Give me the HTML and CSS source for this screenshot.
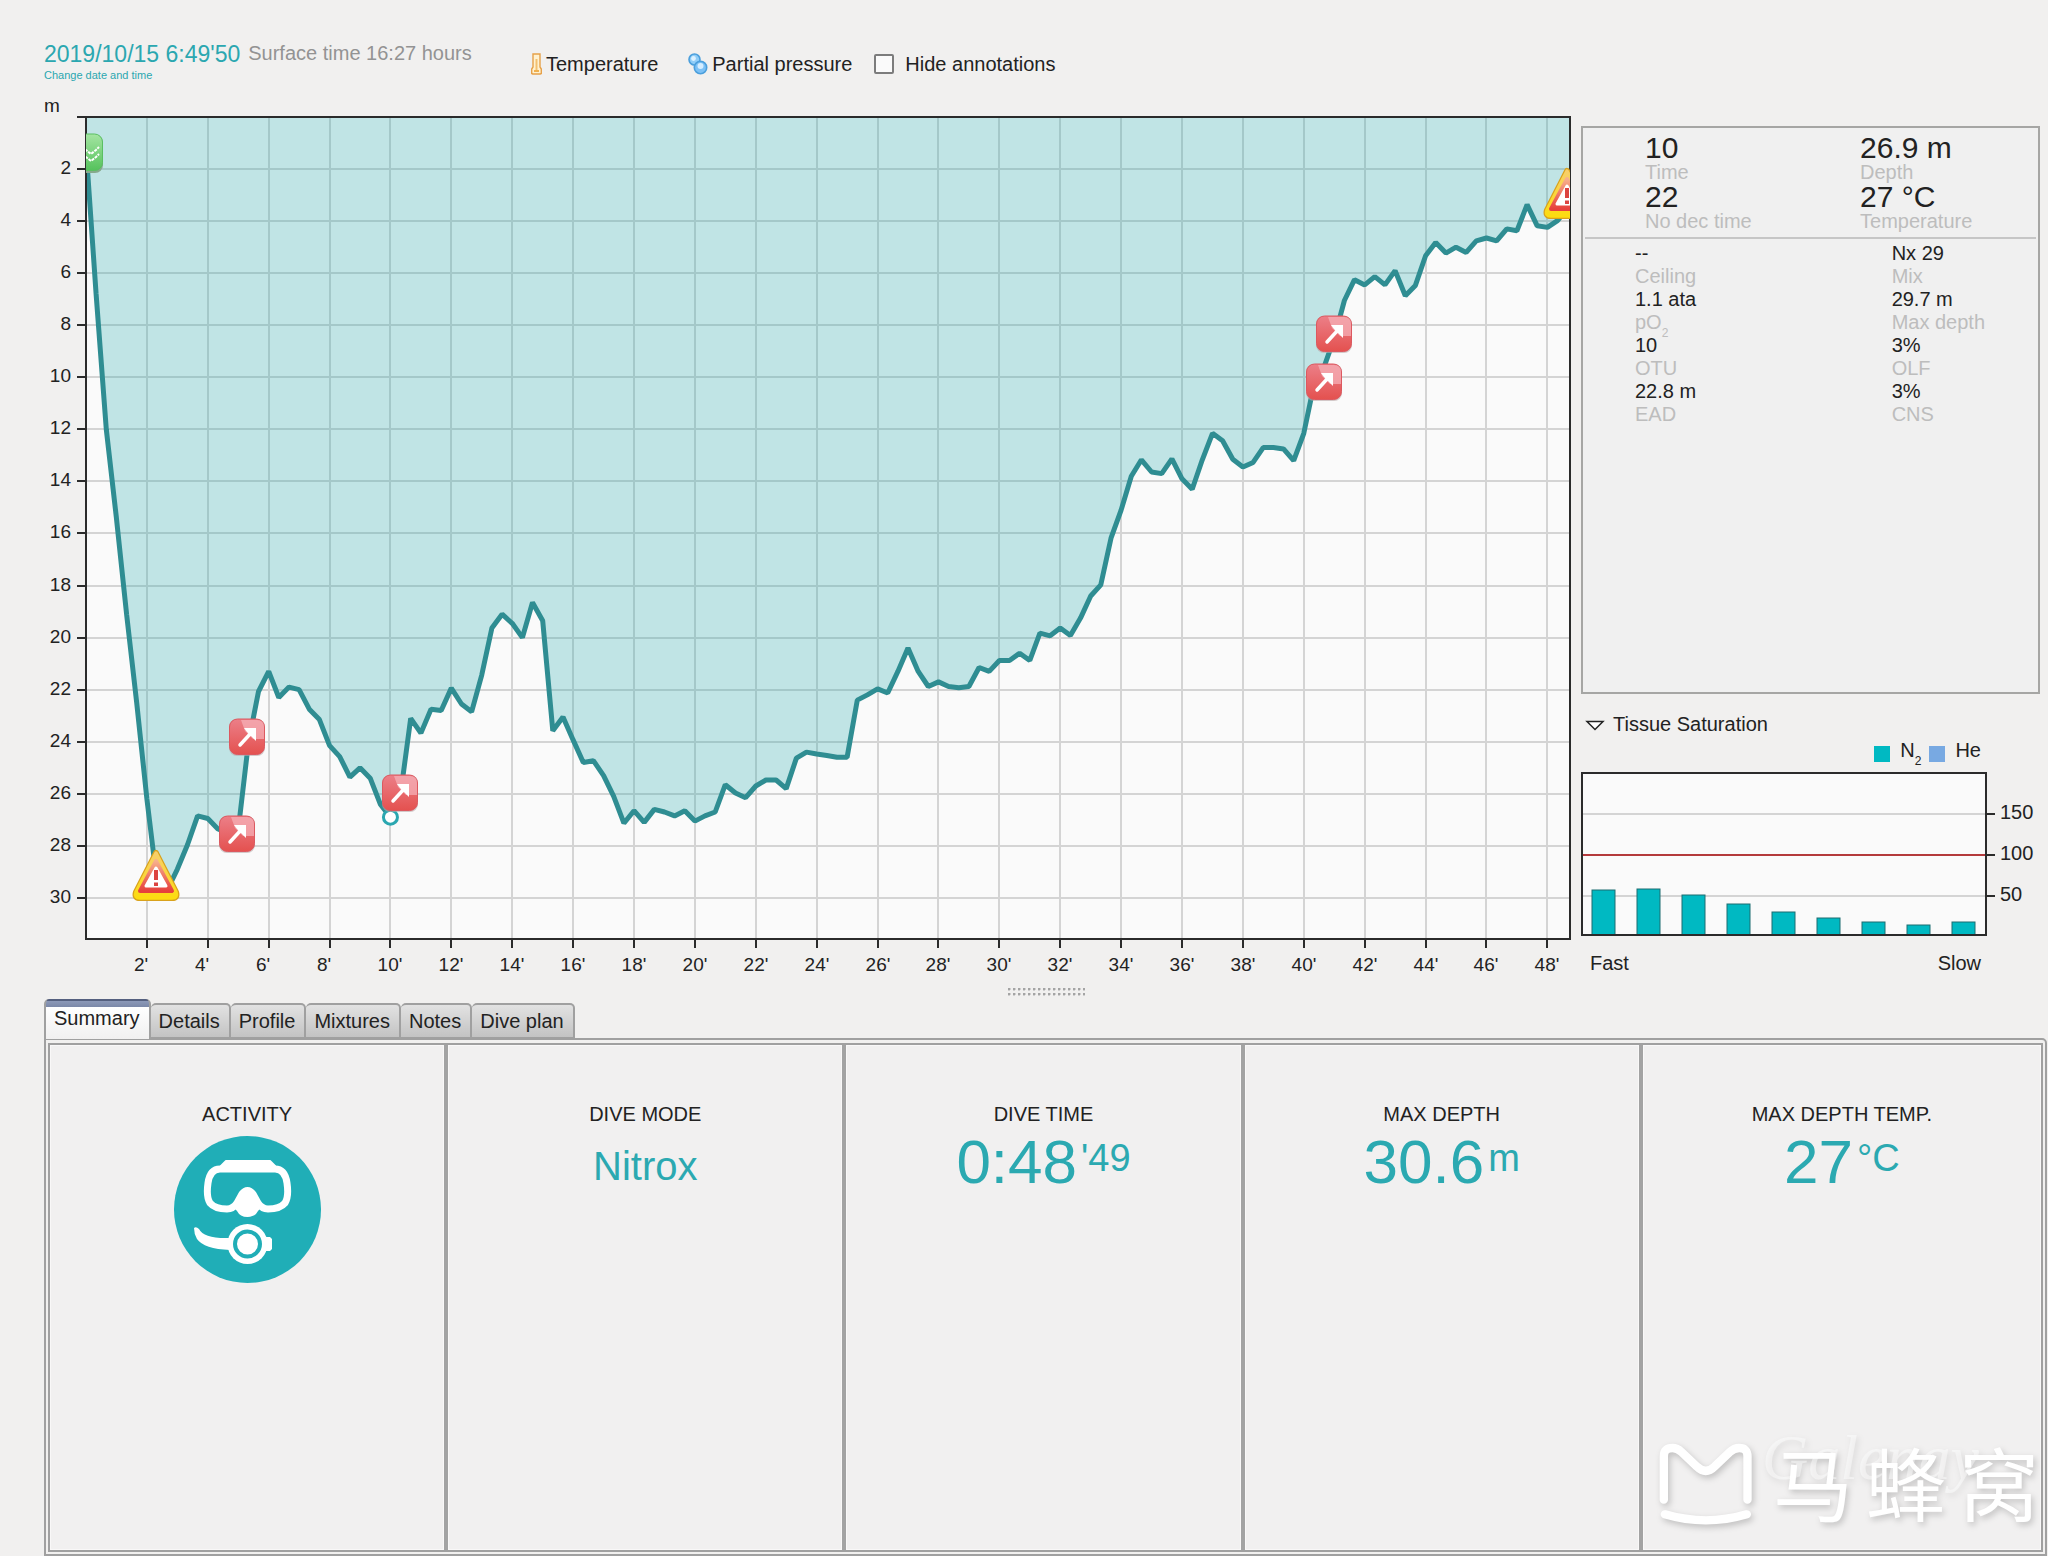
FILE: index.html
```html
<!DOCTYPE html>
<html lang="en">
<head>
<meta charset="utf-8">
<meta name="viewport" content="width=device-width, initial-scale=1">
<title>Dive log</title>
<link rel="stylesheet" href="styles.css">
</head>
<body>
<header class="header">
  <div class="when">
    <div class="when-line">
      <h1 class="date">2019/10/15 6:49'50</h1>
      <span class="surface">Surface time 16:27 hours</span>
    </div>
    <a class="change" href="#">Change date and time</a>
  </div>
  <div class="toolbar">
    <button class="tool" type="button">
      <svg width="11" height="22" viewBox="0 0 11 22" aria-hidden="true">
        <path d="M2 1h7v13l1.300 2v4.500l-1 .5H1.700l-1-.5V16L2 14z" fill="#fff1cf" stroke="#e6a14a" stroke-width="1.400"/>
        <path d="M5.500 6v11" stroke="#f3c070" stroke-width="2"/>
        <path d="M3 18h5" stroke="#f0b04e" stroke-width="2"/>
      </svg>
      <span>Temperature</span>
    </button>
    <button class="tool" type="button">
      <svg width="20" height="22" viewBox="0 0 20 22" aria-hidden="true">
        <circle cx="6.500" cy="6.500" r="5.500" fill="#8fcdf8" stroke="#4b9fdc" stroke-width="1.600"/>
        <circle cx="12.500" cy="14.500" r="6.200" fill="#7cc1f6" stroke="#4b9fdc" stroke-width="1.600"/>
        <circle cx="5.500" cy="5.500" r="2.400" fill="#dcf1ff"/>
        <circle cx="12.500" cy="13" r="3" fill="#d4edff"/>
      </svg>
      <span>Partial pressure</span>
    </button>
    <label class="check"><input type="checkbox"><span>Hide annotations</span></label>
  </div>
</header>

<main class="main">
  <section class="top">
    <svg class="profile" id="profile" viewBox="0 0 1528 880" role="img" aria-label="Depth profile">
      <defs>
        <linearGradient id="red" x1="0" y1="0" x2="0" y2="1">
          <stop offset="0" stop-color="#ec7f88"/><stop offset="1" stop-color="#e4514f"/>
        </linearGradient>
        <linearGradient id="green" x1="0" y1="0" x2="0" y2="1">
          <stop offset="0" stop-color="#a4e5a2"/><stop offset="1" stop-color="#55c25c"/>
        </linearGradient>
        <linearGradient id="yellow" x1="0" y1="0" x2="0" y2="1">
          <stop offset="0" stop-color="#f8cf6a"/><stop offset="1" stop-color="#fcdc10"/>
        </linearGradient>
        <linearGradient id="alarm" x1="0" y1="0" x2="0" y2="1">
          <stop offset="0" stop-color="#f7b08c"/><stop offset="1" stop-color="#e6403c"/>
        </linearGradient>
        <clipPath id="plot-clip"><rect x="42" y="20" width="1484" height="823"/></clipPath>
        <g id="ascent">
          <rect x="-18" y="-18" width="36" height="37" rx="8" fill="#b9a7a7" opacity=".6"/>
          <rect x="-17.500" y="-18" width="35" height="35.500" rx="8" fill="url(#red)" stroke="#dc5960"/>
          <path d="M-6-17H10q7 0 7 7V2H6L-2-6z" fill="#f6b3bb" opacity=".7"/>
          <path d="M-7 8L4-4" stroke="#fff" stroke-width="3.500" stroke-linecap="round"/>
          <path d="M-3-9H9V4L5 0 0-5z" fill="#fff"/>
        </g>
        <g id="warning">
          <path d="M0-22L20 17q2 6-4 6H-16q-6 0-4-6z" fill="url(#yellow)" stroke="#d9a21c" stroke-width="6" stroke-linejoin="round"/>
          <path d="M0-22L20 17q2 6-4 6H-16q-6 0-4-6z" fill="url(#yellow)" stroke="url(#yellow)" stroke-width="3.500" stroke-linejoin="round"/>
          <path d="M0-14L16 16H-16z" fill="url(#alarm)" stroke="url(#alarm)" stroke-width="4" stroke-linejoin="round"/>
          <path d="M0-7L10 11H-10z" fill="#fff" stroke="#fff" stroke-width="3" stroke-linejoin="round"/>
          <path d="M0-5V5" stroke="#dc4440" stroke-width="4"/>
          <rect x="-2" y="7.500" width="4" height="3.500" fill="#dc4440"/>
        </g>
        <g id="start">
          <rect x="-18" y="-18" width="36" height="38" rx="8" fill="#86a98c"/>
          <rect x="-18" y="-19" width="35.500" height="36.500" rx="8" fill="url(#green)" stroke="#5abf62"/>
          <path d="M-6-3l3-3 4 3 5 4 5-4 3-3M-6 5l3-3 4 2 5 4 5-4 3-3" fill="none" stroke="#fff" stroke-width="2" stroke-dasharray="3 1"/>
        </g>
      </defs>
    </svg>

    <aside class="side">
      <div class="panel">
        <dl class="stats stats-big">
          <div><dd>10</dd><dt>Time</dt></div>
          <div><dd>26.9 m</dd><dt>Depth</dt></div>
          <div><dd>22</dd><dt>No dec time</dt></div>
          <div><dd>27 °C</dd><dt>Temperature</dt></div>
        </dl>
        <dl class="stats stats-small">
          <div><dd>--</dd><dt>Ceiling</dt></div>
          <div><dd>Nx 29</dd><dt>Mix</dt></div>
          <div><dd>1.1 ata</dd><dt>pO<sub>2</sub></dt></div>
          <div><dd>29.7 m</dd><dt>Max depth</dt></div>
          <div><dd>10</dd><dt>OTU</dt></div>
          <div><dd>3%</dd><dt>OLF</dt></div>
          <div><dd>22.8 m</dd><dt>EAD</dt></div>
          <div><dd>3%</dd><dt>CNS</dt></div>
        </dl>
      </div>
      <button class="fold" type="button" aria-expanded="true">
        <svg width="20" height="12" viewBox="0 0 20 12" aria-hidden="true"><path d="M2 1.500H18L10 9.500z" fill="#fff" stroke="#222" stroke-width="1.500"/></svg>
        <span>Tissue Saturation</span>
      </button>
      <div class="legend">
        <i class="swatch swatch-n"></i><span class="gas">N<sub>2</sub></span>
        <i class="swatch swatch-he"></i><span class="gas">He</span>
      </div>
      <svg class="tissue" id="tissue" viewBox="0 0 459 206" role="img" aria-label="Tissue saturation"></svg>
    </aside>
  </section>

  <div class="grip" aria-hidden="true"></div>

  <div class="tabs" role="tablist">
    <button class="tab tab-on" role="tab" aria-selected="true" type="button">Summary</button>
    <button class="tab" role="tab" type="button">Details</button>
    <button class="tab" role="tab" type="button">Profile</button>
    <button class="tab" role="tab" type="button">Mixtures</button>
    <button class="tab" role="tab" type="button">Notes</button>
    <button class="tab" role="tab" type="button">Dive plan</button>
  </div>

  <section class="sheet" role="tabpanel">
    <div class="cells">
      <article class="cell">
        <h2>ACTIVITY</h2>
        <svg class="activity" width="147" height="147" viewBox="0 0 147 147" role="img" aria-label="Scuba">
          <circle cx="73.500" cy="73.500" r="73.500" fill="#20aeb7"/>
          <path d="M47 30L52 25H96L101 30z" fill="#fff" stroke="#fff" stroke-width="2" stroke-linejoin="round"/>
          <path d="M46 33H101Q111 33 113 47Q115 61 111 67Q106 73 94 73Q88 73 84 67L79 58Q73.500 51 68 58L63 67Q59 73 53 73Q41 73 36 67Q32 61 34 47Q36 33 46 33z" fill="none" stroke="#fff" stroke-width="7" stroke-linejoin="round"/>
          <path d="M73.500 53Q78 53 81 58L87 70Q86 74 84 75Q81 81 73.500 81Q66 81 63 75Q61 74 60 70L66 58Q69 53 73.500 53z" fill="#fff"/>
          <path d="M20 92Q22 90 25 93Q30 103 56 102V114Q30 113 23 103Q20 98 20 92z" fill="#fff"/>
          <path d="M88 101H96L98 103V113L96 115H88z" fill="#fff"/>
          <circle cx="73.500" cy="108" r="20" fill="#fff"/>
          <circle cx="73.500" cy="108" r="12.500" fill="none" stroke="#20aeb7" stroke-width="4"/>
        </svg>
      </article>
      <article class="cell">
        <h2>DIVE MODE</h2>
        <p class="word">Nitrox</p>
      </article>
      <article class="cell">
        <h2>DIVE TIME</h2>
        <p class="figure"><span>0:48</span><span class="unit">'49</span></p>
      </article>
      <article class="cell">
        <h2>MAX DEPTH</h2>
        <p class="figure"><span>30.6</span><span class="unit">m</span></p>
      </article>
      <article class="cell">
        <h2>MAX DEPTH TEMP.</h2>
        <p class="figure"><span>27</span><span class="unit">°C</span></p>
      </article>
    </div>
  </section>
</main>

<div class="watermark" lang="zh">
  <svg width="97" height="85" viewBox="175 185 290 255" aria-hidden="true">
    <path d="M192 358V228Q192 203 218 203Q232 203 245 215L290 258Q318 285 345 258L390 215Q403 203 418 203Q443 203 443 228V358M195 402Q318 438 441 402" fill="none" stroke="#fff" stroke-width="25" stroke-linecap="round" stroke-linejoin="round"/>
  </svg>
  <span class="signature">Galenay</span>
  <span class="brand"><span>马</span><span>蜂</span><span>窝</span></span>
</div>
<script src="charts.js"></script>
</body>
</html>
```
FILE: charts.js
```javascript
const NS = 'http://www.w3.org/2000/svg';

function add(parent, name, attrs, text) {
  const el = document.createElementNS(NS, name);
  for (const key in attrs) el.setAttribute(key, attrs[key]);
  if (text !== undefined) el.textContent = text;
  parent.appendChild(el);
  return el;
}

// Depth in metres, one sample every 20 seconds.
const depths = [
  1.2, 6.8, 12, 15.4, 19.1, 22.5, 26.2, 29.4, 29.7, 28.9, 27.96, 26.85, 26.95, 27.35, 27.5,
  27.4, 24.05, 22.07, 21.3, 22.3, 21.9, 22, 22.75, 23.15, 24.15, 24.57, 25.36, 25, 25.4, 26.4,
  26.9, 26, 23.1, 23.67, 22.75, 22.8, 21.94, 22.55, 22.85, 21.43, 19.63, 19.1, 19.45, 20, 18.65,
  19.35, 23.58, 23.05, 23.93, 24.8, 24.73, 25.3, 26.1, 27.13, 26.65, 27.1, 26.6, 26.7, 26.85, 26.65,
  27.05, 26.85, 26.7, 25.65, 25.97, 26.15, 25.7, 25.47, 25.47, 25.8, 24.63, 24.4, 24.47, 24.53, 24.6,
  24.6, 22.4, 22.2, 21.97, 22.13, 21.3, 20.4, 21.3, 21.88, 21.7, 21.88, 21.93, 21.88, 21.15, 21.3,
  20.88, 20.88, 20.6, 20.88, 19.83, 19.93, 19.63, 19.92, 19.25, 18.4, 17.97, 16.18, 15.1, 13.8, 13.17,
  13.64, 13.7, 13.13, 13.9, 14.3, 13.17, 12.15, 12.44, 13.15, 13.45, 13.27, 12.7, 12.7, 12.75, 13.2,
  12.15, 10.3, 9.6, 8.5, 7.05, 6.25, 6.45, 6.13, 6.45, 5.9, 6.87, 6.47, 5.33, 4.82, 5.23,
  5, 5.2, 4.76, 4.65, 4.76, 4.3, 4.37, 3.37, 4.18, 4.24, 3.98, 3.5
];

function drawProfile(svg) {
  const left = 42, right = 1526, top = 21, bottom = 843;
  const x = min => left + min * 30.445;
  const y = m => top + m * 26.03;

  add(svg, 'rect', { x: left, y: top, width: right - left, height: bottom - top, class: 'plot' });
  for (let m = 2; m <= 30; m += 2) add(svg, 'line', { x1: left, x2: right, y1: Math.round(y(m)), y2: Math.round(y(m)), class: 'grid' });
  for (let t = 2; t <= 48; t += 2) add(svg, 'line', { x1: Math.round(x(t)), x2: Math.round(x(t)), y1: top, y2: bottom, class: 'grid' });

  const clip = add(svg, 'g', { 'clip-path': 'url(#plot-clip)' });
  const pts = depths.map((d, i) => x(i / 3).toFixed(1) + ',' + y(d).toFixed(1));
  pts.push(right + ',' + y(3.3));
  add(clip, 'polygon', { points: [left + ',' + top].concat(pts, right + ',' + top).join(' '), class: 'water' });
  add(clip, 'polyline', { points: pts.join(' '), class: 'track' });

  add(svg, 'path', { d: `M${left} ${top}H${right}V${bottom}H${left}Z`, class: 'frame' });
  add(svg, 'line', { x1: 33, x2: left, y1: top, y2: top, class: 'frame' });
  add(svg, 'text', { x: 0, y: 16 }, 'm');
  for (let m = 2; m <= 30; m += 2) {
    const at = Math.round(y(m));
    add(svg, 'line', { x1: 33, x2: left, y1: at, y2: at, class: 'frame' });
    add(svg, 'text', { x: 27, y: at + 5, 'text-anchor': 'end' }, m);
  }
  for (let t = 2; t <= 48; t += 2) {
    const at = Math.round(x(t));
    add(svg, 'line', { x1: at, x2: at, y1: bottom, y2: bottom + 9, class: 'frame' });
    add(svg, 'text', { x: t < 10 ? at - 6 : at, y: 875, 'text-anchor': 'middle' }, t + "'");
  }

  const marks = add(svg, 'g', { 'clip-path': 'url(#plot-clip)' });
  [[203, 641], [193, 738], [1290, 238], [1280, 286]].forEach(p => add(marks, 'use', { href: '#ascent', x: p[0], y: p[1] }));
  add(marks, 'circle', { cx: x(10), cy: y(26.9), r: 7, class: 'cursor' });
  add(marks, 'use', { href: '#ascent', x: 356, y: 697 });
  add(marks, 'use', { href: '#warning', x: 112, y: 779 });
  add(marks, 'use', { href: '#warning', x: 1523, y: 97 });
  add(marks, 'use', { href: '#start', x: 41, y: 57 });
}

function drawTissue(svg) {
  const right = 405, top = 1, bottom = 163;
  const y = v => Math.round(165 - v * 0.82);
  add(svg, 'rect', { x: 1, y: top, width: right - 1, height: bottom - top, class: 'plot' });
  [50, 150].forEach(v => add(svg, 'line', { x1: 1, x2: right, y1: y(v), y2: y(v), class: 'grid' }));
  add(svg, 'line', { x1: 1, x2: right, y1: y(100), y2: y(100), class: 'limit' });
  [57, 58.5, 51, 40.6, 30.5, 22.8, 18.6, 14.6, 18.6].forEach((v, i) =>
    add(svg, 'rect', { x: 11 + i * 45, y: y(v), width: 23, height: bottom - y(v), class: 'bar' }));
  add(svg, 'rect', { x: 1, y: top, width: right - 1, height: bottom - top, class: 'frame' });
  [50, 100, 150].forEach(v => {
    add(svg, 'line', { x1: right, x2: right + 9, y1: y(v), y2: y(v), class: 'frame' });
    add(svg, 'text', { x: 419, y: y(v) + 5 }, v);
  });
  add(svg, 'text', { x: 9, y: 198 }, 'Fast');
  add(svg, 'text', { x: 400, y: 198, 'text-anchor': 'end' }, 'Slow');
}

drawProfile(document.getElementById('profile'));
drawTissue(document.getElementById('tissue'));
```
FILE: styles.css
```css
* { box-sizing: border-box; }

body {
  margin: 0;
  min-height: 100vh;
  display: flex;
  flex-direction: column;
  position: relative;
  background: #f1f0ef;
  color: #222;
  font-family: "Liberation Sans", Arial, Helvetica, sans-serif;
  font-size: 20px;
}

h1, h2, p, dl, dd { margin: 0; font-weight: 400; }

button {
  font: inherit;
  color: inherit;
  background: none;
  border: 0;
  padding: 0;
}

/* Header */
.header {
  display: flex;
  align-items: flex-start;
  height: 96px;
  padding-left: 44px;
}
.when { flex: none; width: 487px; padding-top: 40px; }
.when-line { display: flex; gap: 8px; line-height: 28px; }
.date { font-size: 23px; color: #2ba7b0; }
.surface { line-height: 26px; color: #939393; }
.change {
  display: block;
  font-size: 11px;
  line-height: 14px;
  color: #2ba7b0;
  text-decoration: none;
}
.toolbar { display: flex; align-items: center; padding-top: 52px; line-height: 24px; }
.tool { display: flex; align-items: center; gap: 4px; margin-right: 30px; }
.check { display: flex; align-items: center; gap: 11px; margin-left: -8px; }
.check input {
  appearance: none;
  width: 20px;
  height: 20px;
  margin: 0;
  border: 2px solid #7c7c7c;
  border-radius: 2px;
  background: #fafafa;
}

/* Charts */
.main { flex: 1; display: flex; flex-direction: column; padding-left: 44px; }
.top {
  display: grid;
  grid-template-columns: 1528fr 459fr;
  column-gap: 9px;
  padding-right: 8px;
}
.profile, .tissue { display: block; width: 100%; height: auto; overflow: hidden; }
.profile text, .tissue text { font-size: 19px; fill: #222; }
.tissue text { font-size: 20px; }
.plot { fill: #fafafa; }
.grid { stroke: #d4d4d4; stroke-width: 2; }
.water { fill: #12a2a6; fill-opacity: .25; }
.track { fill: none; stroke: #2f8d92; stroke-width: 5; stroke-linejoin: bevel; }
.frame { fill: none; stroke: #2b2b2b; stroke-width: 2; }
.cursor { fill: #fff; stroke: #2ba7b0; stroke-width: 3; }
.limit { stroke: #b43a3c; stroke-width: 2; }
.bar { fill: #00b9c2; stroke: #1d6c70; stroke-width: 1; }

.side { padding-top: 30px; }
.panel {
  height: 568px;
  border: 2px solid #a6a6a4;
  background: #f0f0f0;
  padding: 5px 2px;
}
.stats { display: grid; }
.stats dt { color: #bdbdbd; }
.stats sub, .legend sub { font-size: 12px; line-height: 0; vertical-align: -8px; }
.stats-big {
  grid-template-columns: 11fr 9fr;
  padding: 0 0 6px 60px;
  border-bottom: 2px solid #c6c6c6;
}
.stats-big dd { font-size: 30px; line-height: 29px; }
.stats-big dt { line-height: 20px; }
.stats-small { grid-template-columns: 16fr 9fr; padding: 3px 0 0 50px; line-height: 23px; }

.fold { display: flex; align-items: center; gap: 8px; padding: 18px 0 0 4px; line-height: 24px; }
.fold svg { margin-top: 3px; }
.legend {
  display: flex;
  align-items: flex-end;
  justify-content: flex-end;
  padding-right: 59px;
  height: 28px;
  margin-bottom: 8px;
}
.swatch { width: 16px; height: 16px; margin: 0 10px 2px 0; }
.swatch-n { background: #00b9c2; }
.swatch-he { background: #78a9e2; }
.gas { line-height: 28px; }
.gas + .swatch { margin-left: 8px; }

.grip {
  align-self: center;
  width: 77px;
  height: 8px;
  margin: 10px 0 3px;
  background: radial-gradient(circle at 1px 1px, #a4a4a4 1px, transparent 2px) 0 0 / 5px 5px;
}

/* Tabs */
.tabs { display: flex; align-items: flex-end; height: 40px; position: relative; z-index: 1; margin-bottom: -1px; }
.tab {
  height: 36px;
  padding: 0 9px 0 8px;
  border: 2px solid #a0a0a0;
  border-left-width: 0;
  border-radius: 5px 5px 0 0;
  background: linear-gradient(#e2e2e2, #c3c3c3);
}
.tab-on {
  height: 40px;
  padding-bottom: 2px;
  border-left-width: 2px;
  border-top: 0;
  border-bottom: 0;
  background: linear-gradient(#55607f 2px, #8c99b8 2px, #7b88a8 8px, #fff 8px, #f1f0f0);
}

/* Summary */
.sheet {
  flex: 1;
  display: flex;
  min-height: 400px;
  margin-right: 1px;
  padding: 3px 2px 2px;
  border: 2px solid #a0a0a0;
  border-radius: 0 5px 0 0;
}
.cells {
  flex: 1;
  display: grid;
  grid-template-columns: repeat(4, 394fr) 398fr;
  gap: 4px;
  border: 2px solid #a0a0a0;
  background: #a3a3a3;
}
.cell {
  display: flex;
  flex-direction: column;
  align-items: center;
  padding-top: 56px;
  background: #f1f0f0;
  box-shadow: inset 0 0 1px 1px #fff9;
}
.cell h2 { font-size: 20px; line-height: 26px; }
.activity { margin-top: 9px; }
.word { font-size: 40px; line-height: 44px; margin-top: 17px; color: #2ba9b1; }
.figure { display: flex; gap: 4px; color: #2ba9b1; font-size: 62px; line-height: 68px; margin-top: 1px; }
.unit { font-size: 38px; line-height: 60px; }

/* Watermark */
.watermark {
  position: absolute;
  right: 9px;
  bottom: 20px;
  display: flex;
  align-items: center;
  gap: 18px;
  color: #fff;
  pointer-events: none;
  filter: drop-shadow(2px 3px 3px #0003);
}
.brand {
  display: flex;
  gap: 13px;
  margin-bottom: 8px;
  font: 400 80px/96px "Noto Sans CJK SC", sans-serif;
}
.signature {
  position: absolute;
  left: 104px;
  top: -10px;
  font: italic 64px/72px "Liberation Serif", serif;
  opacity: .45;
}
```
